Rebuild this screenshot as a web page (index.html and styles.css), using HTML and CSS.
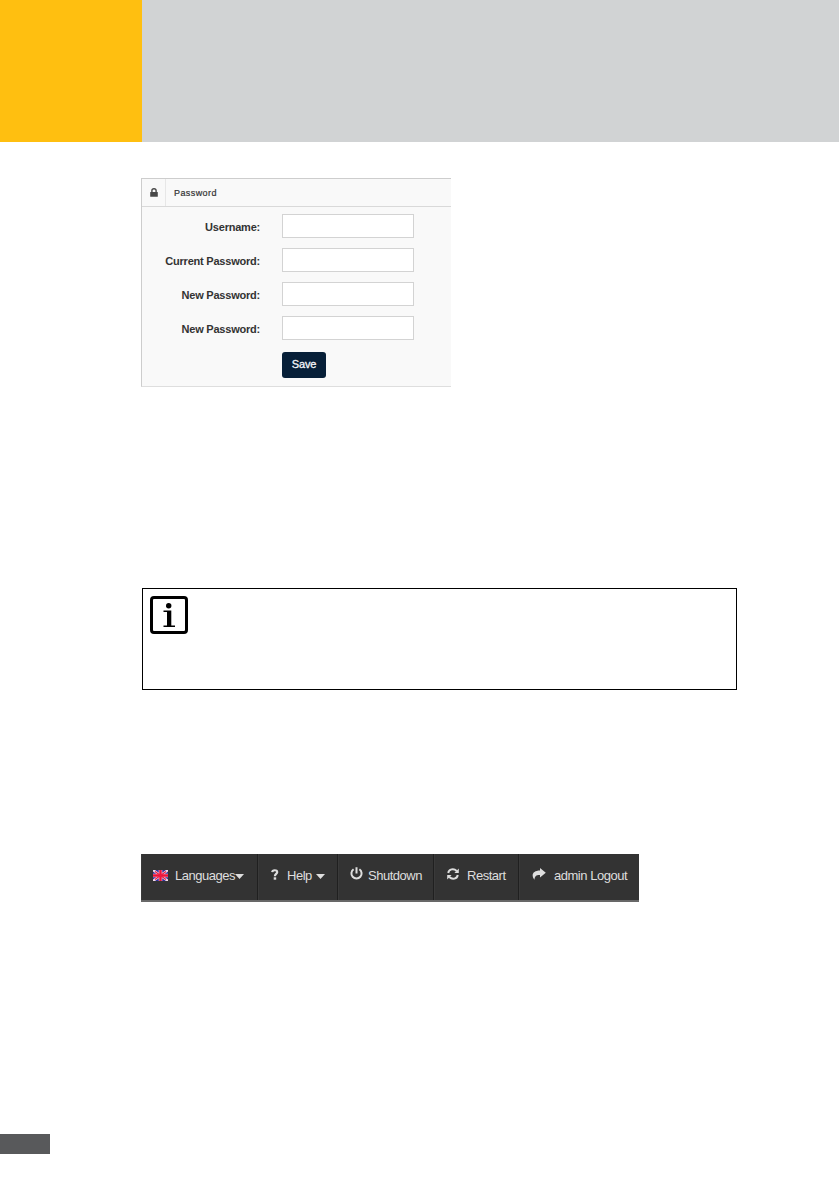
FILE: index.html
```html
<!DOCTYPE html>
<html lang="en">
<head>
<meta charset="utf-8">
<title>Password</title>
<link rel="stylesheet" href="styles.css">
</head>
<body>
<div class="page">
  <header class="banner"><div class="banner-accent"></div></header>
  <main class="content">
    <section class="panel">
      <div class="panel-head">
        <span class="panel-icon"><svg width="8" height="9" viewBox="0 0 8 9"><path d="M1.9 4.5V2.6a2.1 1.9 0 0 1 4.2 0V4.5" fill="none" stroke="#484848" stroke-width="1.4"/><rect x="0.2" y="3.9" width="7.6" height="4.9" rx=".5" fill="#484848"/></svg></span>
        <span class="panel-title">Password</span>
      </div>
      <form class="form">
        <label class="label" for="user">Username:</label><input class="field" id="user" type="text">
        <label class="label" for="current">Current Password:</label><input class="field" id="current" type="password">
        <label class="label" for="new1">New Password:</label><input class="field" id="new1" type="password">
        <label class="label" for="new2">New Password:</label><input class="field" id="new2" type="password">
        <button class="save" type="button">Save</button>
      </form>
    </section>

    <section class="note">
      <svg width="38" height="38" viewBox="0 0 38 38"><rect x="1.5" y="1.5" width="35" height="35" rx="2.5" fill="#fff" stroke="#000" stroke-width="3"/><circle cx="18.7" cy="9.8" r="2.7"/><path d="M13.5 14.5H21.3V29.5H25V31H13.5V29.5H17V16H13.5Z"/></svg>
    </section>

    <nav class="nav">
      <a class="item languages"><svg class="flag" width="15" height="11" viewBox="0 0 15 11"><path fill="#30309c" d="M0 0h15v11H0z"/><path d="M0 0l15 11M15 0L0 11" stroke="#f3dbe8" stroke-width="2.4"/><path d="M7.5 0v11M0 5.5h15" stroke="#f0c6da" stroke-width="3.6"/><path d="M7.5 0v11M0 5.5h15" stroke="#ed1238" stroke-width="2.4"/><path d="M2 1.5l11 8M13 1.5l-11 8" stroke="#e71d46" stroke-width="1.2"/></svg><span class="text">Languages</span><svg class="caret" width="9" height="5" viewBox="0 0 9 5"><path d="M0 0h9L4.5 5z" fill="#dedede"/></svg></a>
      <a class="item help"><svg class="question" width="8" height="11" viewBox="0 0 8 11"><path d="M1.2 3.2C1.4 .6 6.3 .6 6.2 3.1C6.1 5 3.9 4.9 3.9 7.3" fill="none" stroke="#dedede" stroke-width="2.2"/><path d="M2.7 8.3h2.5v2.4H2.7z" fill="#dedede"/></svg><span class="text">Help</span><svg class="caret" width="9" height="5" viewBox="0 0 9 5"><path d="M0 0h9L4.5 5z" fill="#dedede"/></svg></a>
      <a class="item shutdown"><svg class="power" width="13" height="13" viewBox="0 0 13 13"><path d="M3.6 2.2a5.1 5.1 0 1 0 5.8 0M6.5 .3v6.2" fill="none" stroke="#dedede" stroke-width="2"/></svg><span class="text">Shutdown</span></a>
      <a class="item restart"><svg class="refresh" width="12" height="12" viewBox="0 0 12 12"><path d="M1.2 5C1.8 1 6.8 .1 9.7 3M10.8 7C10.2 11 5.2 11.9 2.3 9" fill="none" stroke="#dedede" stroke-width="1.9"/><path d="M11.8 .5v4.4H7.4zM.2 11.5V7.1h4.4z" fill="#dedede"/></svg><span class="text">Restart</span></a>
      <a class="item logout"><svg class="share" width="14" height="12" viewBox="0 0 14 12"><path d="M8 0L13.8 4.8L8 9.6V6.9C4.6 6.7 2.8 7.8 2.4 11.8C-1.3 6.6 1 2.5 8 2.4Z" fill="#dedede"/></svg><span class="text">admin Logout</span></a>
    </nav>
  </main>
  <footer class="page-tab"></footer>
</div>
</body>
</html>
```
FILE: styles.css
```css
* { box-sizing: border-box; }
body { margin: 0; background: #fff; font-family: "Liberation Sans", Arial, sans-serif; }
svg { display: block; flex: none; }
.page { width: 839px; height: 1191px; display: flex; flex-direction: column; overflow: hidden; }
.banner { height: 142px; background: #d1d3d4; flex: none; }
.banner-accent { width: 142px; height: 142px; background: #ffbf10; }
.content { height: 992px; flex: none; padding: 36px 0 0 141px; }

.panel { width: 310px; height: 209px; background: #f9f9f9; border: 1px solid #cdcdcd; border-right: 0; border-bottom-color: #dedede; }
.panel-head { height: 28px; display: flex; align-items: center; border-bottom: 1px solid #d9d9d9; }
.panel-icon { width: 24px; height: 27px; display: flex; align-items: center; padding-left: 8px; border-right: 1px solid #e7e7e7; }
.panel-title { padding: 1px 0 0 8px; font-size: 9px; letter-spacing: .42px; color: #333; -webkit-text-stroke: .2px #333; }
.form { display: grid; grid-template-columns: 118px 132px; column-gap: 22px; grid-template-rows: repeat(4, 24px) 26px; row-gap: 10px; padding-top: 7px; }
.label { align-self: center; padding-top: 2px; text-align: right; white-space: nowrap; font-size: 11px; line-height: 14px; font-weight: bold; letter-spacing: -.22px; color: #333; }
.field { width: 132px; height: 24px; margin: 0; padding: 2px 6px; border: 1px solid #d3d3d3; border-radius: 0; background: #fff; }
.save { grid-column: 2; width: 44px; height: 26px; margin: 2px 0 0; padding: 0 0 2px; border: 0; border-radius: 3px; background: #071f38; color: #f4f6f8; font: 11px/14px "Liberation Sans", Arial, sans-serif; letter-spacing: -.2px; -webkit-text-stroke: .3px #f4f6f8; }

.note { width: 595px; height: 102px; margin: 201px 0 0 1px; padding: 7px; border: 1px solid #000; }

.nav { display: flex; width: 498px; height: 48px; margin-top: 164px; background: #333; border-bottom: 2px solid #686868; }
.item { display: flex; align-items: center; padding-bottom: 4px; border-right: 1px solid #202020; box-shadow: inset 1px 0 #3a3a3a; }
.text { padding-top: 2px; font-size: 13px; line-height: 18px; letter-spacing: -.48px; white-space: nowrap; color: #dedede; }
.caret { margin-top: 3px; }
.languages { width: 117px; padding-left: 12px; }
.flag { margin: 0 7px 0 0; }
.help { width: 80px; padding-left: 13px; }
.question { margin: 0 8px 2px 0; }
.help .caret { margin-left: 4px; }
.shutdown { width: 96px; padding-left: 12px; }
.power { margin: 0 5px 3px 0; }
.restart { width: 85px; padding-left: 13px; }
.refresh { margin: 0 8px 2px 0; }
.logout { width: 120px; padding-left: 13px; border-right: 0; }
.share { margin: 0 8px 2px 0; }

.page-tab { width: 50px; height: 20px; background: #58595b; flex: none; }
```
